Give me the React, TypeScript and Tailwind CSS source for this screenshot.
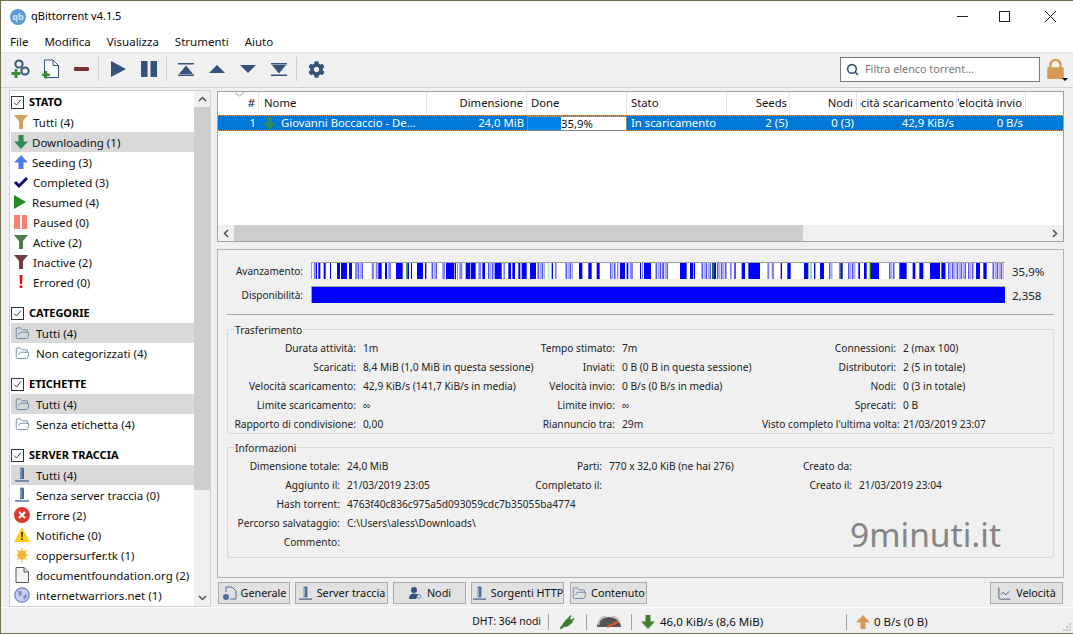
import React from "react";
import { FaCog } from "react-icons/fa";
import { FolderOpen, Search, LineChart } from "lucide-react";

const font = "font-['Noto_Sans',sans-serif]";

// piece map, numbers are in 1/3 px from the bar's left edge
const B = "#0000ff";
const L = "#8080ff";
const G = "#008000";
const P = "#90ee90";
const rawPieces: [number, number, string][] = [
  [8, 5, L], [14, 4, B], [22, 6, B], [38, 6, B], [57, 3, B], [78, 9, B], [90, 18, B], [114, 9, B], [132, 6, L], [140, 13, L],
  [182, 7, L], [194, 6, L], [202, 10, B], [222, 6, B], [232, 8, L], [255, 20, B], [286, 4, G], [290, 4, B], [300, 3, B], [318, 18, B],
  [342, 4, B], [362, 14, L], [394, 8, L], [405, 25, B], [432, 10, L], [445, 9, L], [464, 14, B], [480, 14, B], [502, 8, L], [514, 8, B],
  [532, 20, L], [552, 20, B], [577, 5, L], [592, 8, B], [604, 8, B], [622, 6, B], [632, 15, B], [657, 18, B], [680, 20, L], [712, 3, P],
  [722, 4, B], [732, 5, L], [764, 23, L], [804, 10, B], [832, 10, B], [857, 9, B], [898, 16, L], [918, 4, L], [927, 15, B], [947, 5, B],
  [957, 9, L], [987, 15, L], [1002, 18, B], [1034, 21, L], [1055, 14, L], [1107, 20, B], [1137, 17, L], [1140, 7, B], [1172, 30, L], [1203, 4, G],
  [1207, 8, B], [1219, 30, L], [1257, 5, L], [1270, 4, B], [1292, 10, B], [1312, 35, B], [1369, 6, L], [1382, 7, L], [1409, 4, B], [1429, 10, B],
  [1479, 13, B], [1497, 6, P], [1509, 4, B], [1527, 12, B], [1555, 12, L], [1585, 4, G], [1589, 6, B], [1612, 23, L], [1642, 5, B], [1659, 8, B],
  [1676, 4, G], [1680, 24, B], [1735, 14, L], [1765, 22, B], [1805, 8, B], [1825, 12, B], [1857, 27, B], [1884, 20, L], [1892, 10, B], [1912, 20, L],
  [1937, 25, L], [1972, 15, L], [1995, 12, B], [2017, 10, B], [2045, 32, L],
];

// the wide pale runs in the bar are really thin stripes
const pieces = rawPieces.flatMap(([x, w, color]): [number, number, string][] => {
  if (color !== L || w < 10) return [[x, w, color]];
  const out: [number, number, string][] = [];
  for (let i = 0; i < w; i += 6) out.push([x + i, 3, i % 12 === 0 ? B : L]);
  return out;
});

function Funnel({ color }: { color: string }) {
  return (
    <svg width="14" height="14" viewBox="0 0 14 14">
      <path d="M0 0H14L9 6V14H5V6Z" fill={color} />
    </svg>
  );
}

function ArrowDown({ color = "#2e8b57", size = 14 }: { color?: string; size?: number }) {
  return (
    <svg width={size} height={size} viewBox="0 0 14 14" className="shrink-0">
      <path d="M4.5 0H9.5V6.5H14L7 14L0 6.5H4.5Z" fill={color} />
    </svg>
  );
}

function ArrowUp({ color = "#4d7ae8", size = 14 }: { color?: string; size?: number }) {
  return (
    <svg width={size} height={size} viewBox="0 0 14 14" className="shrink-0">
      <path d="M4.5 14H9.5V7.5H14L7 0L0 7.5H4.5Z" fill={color} />
    </svg>
  );
}

function Tracker({ size = 16 }: { size?: number }) {
  return (
    <svg width={size} height={size} viewBox="0 0 16 16" className="shrink-0">
      <path d="M6 1.5Q6 .5 8 .5T10 1.5V12H6Z" fill="#4a6a94" />
      <path d="M7 2V11" stroke="#a9bcd3" strokeWidth="1" />
      <path d="M1 14H15" stroke="#4a6a94" strokeWidth="1.4" />
    </svg>
  );
}

const Folder = () => <FolderOpen size={15} strokeWidth={1.2} color="#4f6f9c" className="shrink-0" />;

const statusItems: [React.ReactNode, string, string][] = [
  [<Funnel color="#d9a05b" />, "Tutti (4)", "ml-[5px]"],
  [<ArrowDown color="#2e8b57" />, "Downloading (1)", "ml-[4px]"],
  [<ArrowUp />, "Seeding (3)", "ml-[4px]"],
  [
    <svg width="14" height="14" viewBox="0 0 14 14">
      <path d="M1 7L5 11L13 3" fill="none" stroke="#0b0b7a" strokeWidth="3" />
    </svg>,
    "Completed (3)",
    "ml-[5px]",
  ],
  [
    <svg width="14" height="14" viewBox="0 0 14 14">
      <path d="M0 0L12 7L0 14Z" fill="#228b22" />
    </svg>,
    "Resumed (4)",
    "ml-[4px]",
  ],
  [
    <svg width="14" height="14" viewBox="0 0 14 14">
      <path d="M0 0H6V14H0ZM8 0H13V14H8Z" fill="#fa8072" />
    </svg>,
    "Paused (0)",
    "ml-[5px]",
  ],
  [<Funnel color="#4c7c4c" />, "Active (2)", "ml-[5px]"],
  [<Funnel color="#6f3f3f" />, "Inactive (2)", "ml-[5px]"],
  [
    <svg width="14" height="14" viewBox="0 0 14 14">
      <path d="M5.5 0H8.5L8 9H6ZM5.7 10.5H8.3V13H5.7Z" fill="#ff0000" />
    </svg>,
    "Errored (0)",
    "ml-[5px]",
  ],
];

const trackerIcons: [React.ReactNode, string][] = [
  [
    <svg width="16" height="16" viewBox="0 0 16 16">
      <circle cx="8" cy="8" r="8" fill="#db3b2b" />
      <path d="M5 5L11 11M11 5L5 11" stroke="#fff" strokeWidth="2" />
    </svg>,
    "Errore (2)",
  ],
  [
    <svg width="16" height="16" viewBox="0 0 16 16">
      <path d="M8 0L16 15H0Z" fill="#fcd116" />
      <path d="M7.2 5H8.8L8.5 10.5H7.5ZM7.2 11.5H8.8V13H7.2Z" fill="#111" />
    </svg>,
    "Notifiche (0)",
  ],
  [
    <svg width="16" height="16" viewBox="0 0 16 16">
      <path d="M8 1V15M1 8H15M3 3L13 13M13 3L3 13" stroke="#f3c760" strokeWidth="1.2" />
      <circle cx="8" cy="8" r="4.5" fill="#f2b632" />
    </svg>,
    "coppersurfer.tk (1)",
  ],
  [
    <svg width="16" height="16" viewBox="0 0 16 16">
      <path d="M2 .5H10L14.5 5V15.5H2Z" fill="#f4f4f4" stroke="#555" strokeWidth="1" />
      <path d="M10 .5V5H14.5" fill="#ddd" stroke="#555" strokeWidth="1" />
    </svg>,
    "documentfoundation.org (2)",
  ],
  [
    <svg width="16" height="16" viewBox="0 0 16 16">
      <circle cx="8" cy="8" r="7.2" fill="#c6d0ee" stroke="#6f7fc4" strokeWidth="1.2" />
      <path d="M4 4Q8 3 8 6T5 9ZM9 9L13 7Q13 11 10 13Z" fill="#7f8fd0" />
    </svg>,
    "internetwarriors.net (1)",
  ],
];

function SectionHead({ title, first }: { title: string; first?: boolean }) {
  return (
    <div className={`flex items-center h-5 ${first ? "" : "mt-[11px]"}`}>
      <div className="w-[13px] h-[13px] border border-[#333] flex items-center justify-center bg-white">
        <svg width="9" height="9" viewBox="0 0 9 9">
          <path d="M1 4.5L3.5 7L8 1.5" fill="none" stroke="#444" strokeWidth="1" />
        </svg>
      </div>
      <span className="ml-[5px] text-[11px] font-bold text-black">{title}</span>
    </div>
  );
}

function SideRow({ icon, label, active, textClass }: { icon: React.ReactNode; label: string; active?: boolean; textClass: string }) {
  return (
    <div className={`flex items-center h-5 pl-[3px] ${active ? "bg-[#d9d9d9]" : ""}`}>
      {icon}
      <span className={`${textClass} pt-[2px] text-[11.5px] text-[#111] whitespace-nowrap`}>{label}</span>
    </div>
  );
}

function Sidebar() {
  const wide = "ml-[6px]";
  const iconBox = (node: React.ReactNode) => <span className="w-[16px] flex justify-center shrink-0">{node}</span>;
  return (
    <div className="w-[202px] h-[517px] ml-[8px] mt-[2px] flex bg-white border border-[#d0d0d0]">
      <div className="w-[185px] pl-[1px] pt-[1px] overflow-hidden">
        <SectionHead title="STATO" first />
        {statusItems.map(([icon, label, ml], i) => (
          <SideRow key={label} icon={<span className="w-[14px] flex justify-center shrink-0">{icon}</span>} label={label} active={i === 1} textClass={ml} />
        ))}
        <SectionHead title="CATEGORIE" />
        <SideRow icon={iconBox(<Folder />)} label="Tutti (4)" active textClass={wide} />
        <SideRow icon={iconBox(<Folder />)} label="Non categorizzati (4)" textClass={wide} />
        <SectionHead title="ETICHETTE" />
        <SideRow icon={iconBox(<Folder />)} label="Tutti (4)" active textClass={wide} />
        <SideRow icon={iconBox(<Folder />)} label="Senza etichetta (4)" textClass={wide} />
        <SectionHead title="SERVER TRACCIA" />
        <SideRow icon={iconBox(<Tracker />)} label="Tutti (4)" active textClass={wide} />
        <SideRow icon={iconBox(<Tracker />)} label="Senza server traccia (0)" textClass={wide} />
        {trackerIcons.map(([icon, label]) => (
          <SideRow key={label} icon={iconBox(icon)} label={label} textClass={wide} />
        ))}
      </div>
      <div className="w-[16px] flex flex-col bg-[#f0f0f0]">
        <div className="h-[16px] flex items-center justify-center">
          <svg width="9" height="6" viewBox="0 0 9 6"><path d="M1 5L4.5 1.5L8 5" fill="none" stroke="#505050" strokeWidth="1.5" /></svg>
        </div>
        <div className="h-[383px] bg-[#cdcdcd]" />
        <div className="flex-1" />
        <div className="h-[16px] flex items-center justify-center">
          <svg width="9" height="6" viewBox="0 0 9 6"><path d="M1 1L4.5 4.5L8 1" fill="none" stroke="#505050" strokeWidth="1.5" /></svg>
        </div>
      </div>
    </div>
  );
}

const sep = <div className="w-px h-[24px] bg-[#d0d0d0] mx-[5px]" />;

function Toolbar() {
  const c = "#35527a";
  return (
    <div className="flex items-center h-[34px] pl-[8px] pr-[8px] pb-[2px]">
      <div className="w-[24px] flex justify-center">
        <svg width="20" height="20" viewBox="0 0 20 20">
          <circle cx="8" cy="5" r="3.6" fill="none" stroke={c} strokeWidth="2" />
          <circle cx="14" cy="12" r="3.6" fill="none" stroke={c} strokeWidth="2" />
          <path d="M5 10V19M0.5 14.5H9.5" stroke="#3a8a3a" strokeWidth="2.8" />
        </svg>
      </div>
      <div className="w-[24px] ml-[6px] flex justify-center">
        <svg width="20" height="20" viewBox="0 0 20 20">
          <path d="M3.5 1H12L17.5 6.5V18.5H3.5Z" fill="#fff" stroke={c} strokeWidth="1" />
          <path d="M12 1V6.5H17.5" fill="none" stroke={c} strokeWidth="1" />
          <path d="M5 12V19.5M1.2 15.7H8.8" stroke="#3a8a3a" strokeWidth="2.4" />
        </svg>
      </div>
      <div className="w-[24px] ml-[6px] flex justify-center">
        <div className="w-[15px] h-[4px] rounded-[1px] bg-[#7a3333]" />
      </div>
      {sep}
      <div className="w-[24px] ml-[2px] flex justify-center">
        <svg width="16" height="16" viewBox="0 0 16 16"><path d="M1 0L16 8L1 16Z" fill={c} /></svg>
      </div>
      <div className="w-[24px] ml-[7px] flex justify-center">
        <svg width="16" height="16" viewBox="0 0 16 16"><path d="M0 0H6.5V16H0ZM9.5 0H16V16H9.5Z" fill={c} /></svg>
      </div>
      {sep}
      <div className="w-[24px] ml-[2px] flex justify-center">
        <svg width="16" height="13" viewBox="0 0 16 13"><path d="M0 0H16V1.5H0ZM8 2.5L15 11H1ZM0 11.5H16V13H0Z" fill={c} /></svg>
      </div>
      <div className="w-[24px] ml-[7px] flex justify-center">
        <svg width="16" height="8" viewBox="0 0 16 8"><path d="M8 0L16 8H0Z" fill={c} /></svg>
      </div>
      <div className="w-[24px] ml-[7px] flex justify-center">
        <svg width="16" height="8" viewBox="0 0 16 8"><path d="M0 0H16L8 8Z" fill={c} /></svg>
      </div>
      <div className="w-[24px] ml-[7px] flex justify-center">
        <svg width="16" height="13" viewBox="0 0 16 13"><path d="M0 0H16V1.5H0ZM1 2H15L8 10.5ZM0 11.5H16V13H0Z" fill={c} /></svg>
      </div>
      {sep}
      <div className="w-[24px] ml-[2px] flex justify-center">
        <FaCog size={17} color={c} />
      </div>
      <div className="flex-1" />
      <div className="w-[200px] h-[25px] bg-white border border-[#7a7a7a] flex items-center pl-[5px]">
        <Search size={13} strokeWidth={3} color={c} />
        <span className="ml-[6px] text-[10.8px] text-[#777]">Filtra elenco torrent…</span>
      </div>
      <div className="relative ml-[6px] w-[19px] h-[22px]">
        <svg width="19" height="22" viewBox="0 0 20 24">
          <path d="M4.5 11V7.5A5.5 5.5 0 0 1 15.5 7.5V11" fill="none" stroke="#d29a55" strokeWidth="2.6" />
          <rect x="1" y="10" width="18" height="13" rx="1.5" fill="#d29a55" />
        </svg>
        <div className="absolute right-[-3px] bottom-[-1px] w-0 h-0 border-l-[3px] border-r-[3px] border-t-[3px] border-l-transparent border-r-transparent border-t-black" />
      </div>
    </div>
  );
}

const headers: [string, string, string][] = [
  ["#", "w-[41px]", "justify-end pr-[3px]"],
  ["Nome", "w-[168px]", "justify-start pl-[5px]"],
  ["Dimensione", "w-[100px]", "justify-end pr-[3px]"],
  ["Done", "w-[100px]", "justify-start pl-[4px]"],
  ["Stato", "w-[100px]", "justify-start pl-[4px]"],
  ["Seeds", "w-[63px]", "justify-end pr-[2px]"],
  ["Nodi", "w-[67px]", "justify-end pr-[3px]"],
  ["Velocità scaricamento", "w-[100px]", "justify-end pl-[3px] pr-[2px]"],
  ["Velocità invio", "w-[69px]", "justify-end pl-[1px] pr-[3px]"],
];

function TorrentTable() {
  return (
    <div className="h-[151px] flex flex-col bg-white border border-[#a0a0a0]">
      <div className="relative flex h-[23px]">
        {headers.map(([title, w, align]) => (
          <div key={title} className={`${w} ${align} flex items-center shrink-0 border-r border-[#e5e5e5] text-[11.3px] text-[#111] whitespace-nowrap`}>
            <div className="flex justify-end overflow-hidden">
              <span className="shrink-0">{title}</span>
            </div>
          </div>
        ))}
        <svg className="absolute left-[16px] top-0" width="11" height="5" viewBox="0 0 11 5">
          <path d="M1 .5L5.5 4L10 .5" fill="none" stroke="#a0a0a0" strokeWidth="1" />
        </svg>
      </div>
      <div className="flex h-[16px] bg-[#0078d7] text-white text-[11.3px] items-center border-y border-dotted border-[#e8a060] whitespace-nowrap">
        <div className="w-[41px] text-right pr-[3px]">1</div>
        <div className="w-[168px] flex items-center pl-[4px]">
          <ArrowDown size={13} />
          <span className="ml-[5px]">Giovanni Boccaccio - De...</span>
        </div>
        <div className="w-[100px] text-right pr-[3px]">24,0 MiB</div>
        <div className="relative w-[100px] h-[15px] bg-white border border-[#888] text-[#111] text-center shrink-0">
          <div className="absolute left-0 top-0 bottom-0 w-[33px] bg-[#0083e8]" />
          <span className="relative leading-[13px] block">35,9%</span>
        </div>
        <div className="w-[100px] pl-[4px]">In scaricamento</div>
        <div className="w-[63px] text-right pr-[2px]">2 (5)</div>
        <div className="w-[67px] text-right pr-[3px]">0 (3)</div>
        <div className="w-[100px] text-right pr-[3px]">42,9 KiB/s</div>
        <div className="w-[69px] text-right pr-[3px]">0 B/s</div>
      </div>
      <div className="flex-1" />
      <div className="h-[16px] flex bg-[#f0f0f0]">
        <div className="w-[16px] flex items-center justify-center">
          <svg width="6" height="9" viewBox="0 0 6 9"><path d="M5 1L1.5 4.5L5 8" fill="none" stroke="#505050" strokeWidth="1.5" /></svg>
        </div>
        <div className="w-[569px] bg-[#cdcdcd]" />
        <div className="flex-1" />
        <div className="w-[16px] flex items-center justify-center">
          <svg width="6" height="9" viewBox="0 0 6 9"><path d="M1 1L4.5 4.5L1 8" fill="none" stroke="#505050" strokeWidth="1.5" /></svg>
        </div>
      </div>
    </div>
  );
}

type Cell = [string, string];

const transfer: Cell[][] = [
  [["Durata attività:", "1m"], ["Tempo stimato:", "7m"], ["Connessioni:", "2 (max 100)"]],
  [["Scaricati:", "8,4 MiB (1,0 MiB in questa sessione)"], ["Inviati:", "0 B (0 B in questa sessione)"], ["Distributori:", "2 (5 in totale)"]],
  [["Velocità scaricamento:", "42,9 KiB/s (141,7 KiB/s in media)"], ["Velocità invio:", "0 B/s (0 B/s in media)"], ["Nodi:", "0 (3 in totale)"]],
  [["Limite scaricamento:", "∞"], ["Limite invio:", "∞"], ["Sprecati:", "0 B"]],
  [["Rapporto di condivisione:", "0,00"], ["Riannuncio tra:", "29m"], ["Visto completo l'ultima volta:", "21/03/2019 23:07"]],
];

const info: Cell[][] = [
  [["Dimensione totale:", "24,0 MiB"], ["Parti:", "770 x 32,0 KiB (ne hai 276)"], ["Creato da:", ""]],
  [["Aggiunto il:", "21/03/2019 23:05"], ["Completato il:", ""], ["Creato il:", "21/03/2019 23:04"]],
  [["Hash torrent:", "4763f40c836c975a5d093059cdc7b35055ba4774"], ["", ""], ["", ""]],
  [["Percorso salvataggio:", "C:\\Users\\aless\\Downloads\\"], ["", ""], ["", ""]],
  [["Commento:", ""], ["", ""], ["", ""]],
];

function Group({ title, rows, cols, height, className }: { title: string; rows: Cell[][]; cols: string; height: string; className: string }) {
  return (
    <div className={`relative border border-[#d8d8d8] rounded-[2px] mx-[9px] ${height} ${className}`}>
      <span className="absolute left-[6px] -top-[6px] px-[1px] bg-[#f0f0f0] text-[10.2px] leading-[13px] text-[#222]">{title}</span>
      <div className={`grid ${cols} auto-rows-[19px] pt-[9px] text-[10.2px] text-[#222] whitespace-nowrap`}>
        {rows.flat().map(([label, value], i) => (
          <React.Fragment key={i}>
            <div className="text-right leading-[19px]">{label}</div>
            <div className="pl-[7px] leading-[19px]">{value}</div>
          </React.Fragment>
        ))}
      </div>
    </div>
  );
}

function DetailsPanel() {
  return (
    <div className="h-[329px] mt-[7px] border border-[#b4b4b4] bg-[#f0f0f0]">
      <div className="flex items-start h-[17px] mt-[12px] text-[10px] leading-[15px] text-[#222]">
        <div className="w-[93px] text-right pr-[8px] pt-[2px]">Avanzamento:</div>
        <svg className="w-[694px] h-[17px]" viewBox="0 0 2082 51" preserveAspectRatio="none">
          <rect width="2082" height="51" fill="#fff" />
          {pieces.map(([x, w, color]) => (
            <rect key={x} x={x} y="3" width={w} height="48" fill={color} />
          ))}
          <rect width="2082" height="3" fill="#a0a0a0" />
          <rect width="3" height="51" fill="#a0a0a0" />
        </svg>
        <div className="ml-[7px] pt-[2px] text-[11.5px]">35,9%</div>
      </div>
      <div className="flex items-start h-[17px] mt-[7px] text-[10px] leading-[15px] text-[#222]">
        <div className="w-[93px] text-right pr-[8px] pt-[2px]">Disponibilità:</div>
        <div className="w-[694px] h-[17px] bg-[#0000ff] border-t border-l border-[#a0a0a0]" />
        <div className="ml-[7px] pt-[2px] text-[11.5px]">2,358</div>
      </div>
      <div className="h-px mx-[9px] mt-[11px] bg-[#a8a8a8]" />
      <Group title="Trasferimento" rows={transfer} cols="grid-cols-[128px_184px_75px_147px_134px_1fr]" height="h-[105px]" className="mt-[14px]" />
      <Group title="Informazioni" rows={info} cols="grid-cols-[112px_140px_122px_160px_90px_1fr]" height="h-[111px]" className="mt-[13px]" />
    </div>
  );
}

function TabButton({ icon, label, width, className = "" }: { icon: React.ReactNode; label: string; width: string; className?: string }) {
  return (
    <div className={`flex items-center justify-center gap-[4px] h-[22px] ${width} ${className} bg-[#e1e1e1] border border-[#adadad] text-[10.8px] text-[#111] whitespace-nowrap`}>
      {icon}
      <span className="pt-[1px]">{label}</span>
    </div>
  );
}

function TabBar() {
  return (
    <div className="flex mt-[4px] pl-[1px] gap-[5px] items-center">
      <TabButton
        width="w-[72px]"
        label="Generale"
        icon={
          <svg width="15" height="15" viewBox="0 0 15 15" className="shrink-0">
            <path d="M4 6V1H10L14 5V13H8" fill="none" stroke="#4f6f9c" strokeWidth="1" />
            <circle cx="4" cy="11" r="3" fill="#4f6f9c" />
          </svg>
        }
      />
      <TabButton width="w-[93px]" label="Server traccia" icon={<Tracker size={15} />} />
      <TabButton
        width="w-[73px]"
        label="Nodi"
        icon={
          <svg width="15" height="15" viewBox="0 0 15 15" className="shrink-0">
            <circle cx="6" cy="4" r="3" fill="#35527a" />
            <path d="M1 13Q1 7.5 6 7.5T10 9L8 13Z" fill="#35527a" />
            <circle cx="11" cy="10.5" r="2" fill="none" stroke="#6f8fb8" strokeWidth="1" />
          </svg>
        }
      />
      <TabButton width="w-[93px]" label="Sorgenti HTTP" icon={<Tracker size={15} />} />
      <TabButton width="w-[77px]" className="ml-[1px]" label="Contenuto" icon={<Folder />} />
      <div className="flex-1" />
      <TabButton width="w-[73px]" className="mr-[1px]" label="Velocità" icon={<LineChart size={15} strokeWidth={1.4} color="#35527a" />} />
    </div>
  );
}

function StatusBar() {
  const div = <div className="w-px h-[16px] bg-[#a0a0a0]" />;
  return (
    <div className="flex items-center justify-end h-[26px] border-t border-white pt-[2px] pr-[2px] text-[11.5px] text-[#111] bg-[#f0f0f0] whitespace-nowrap">
      <span className="text-[10.4px]">DHT: 364 nodi</span>
      <div className="ml-[7px]">{div}</div>
      <div className="mx-[11px]">
        <svg width="15" height="15" viewBox="0 0 15 15">
          <path d="M0 15L3 11L5 8L9 4L12 8L7 12L4 12Z M8 5L11 1.5M11 8L14 4.5" fill="#3f7f2f" stroke="#3f7f2f" strokeWidth="1.6" />
        </svg>
      </div>
      {div}
      <div className="mx-[10px]">
        <svg width="24" height="12" viewBox="0 0 24 12">
          <path d="M0 11A12 10 0 0 1 24 11Z" fill="#555" />
          <path d="M2 9A10 8 0 0 1 22 6" fill="none" stroke="#bbb" strokeWidth="1.5" />
          <path d="M10 11L21 6" stroke="#e05a20" strokeWidth="2" />
        </svg>
      </div>
      {div}
      <div className="ml-[9px]"><ArrowDown color="#3f7f2f" size={14} /></div>
      <span className="ml-[5px] w-[186px]">46,0 KiB/s (8,6 MiB)</span>
      {div}
      <div className="ml-[9px]"><ArrowUp color="#d29a55" size={14} /></div>
      <span className="ml-[4px] w-[188px]">0 B/s (0 B)</span>
      <svg width="9" height="9" viewBox="0 0 9 9" className="self-end mb-[2px]">
        <path d="M7 1h2v2H7zM4 4h2v2H4zM7 4h2v2H7zM1 7h2v2H1zM4 7h2v2H4zM7 7h2v2H7z" fill="#c8c8c8" />
      </svg>
    </div>
  );
}

export default function App() {
  return (
    <div className={`relative w-[1073px] h-[634px] overflow-hidden bg-[#f0f0f0] border-t border-l border-b border-[#6f6f50] ${font}`}>
      <div className="flex items-center h-[31px] bg-white">
        <div className="ml-[9px] w-[16px] h-[16px] rounded-full bg-[#5a9bd8] flex items-center justify-center text-[9px] font-bold text-[#cfe3f6] leading-none">qb</div>
        <span className="ml-[5px] text-[11px] text-black">qBittorrent v4.1.5</span>
        <div className="flex-1" />
        <svg width="11" height="11" viewBox="0 0 11 11"><path d="M0 5.5H11" stroke="#222" strokeWidth="1" /></svg>
        <svg className="ml-[31px]" width="11" height="11" viewBox="0 0 11 11"><rect x=".5" y=".5" width="10" height="10" fill="none" stroke="#222" strokeWidth="1" /></svg>
        <svg className="ml-[35px] mr-[17px]" width="11" height="11" viewBox="0 0 11 11"><path d="M0 0L11 11M11 0L0 11" stroke="#222" strokeWidth="1" /></svg>
      </div>
      <div className="flex items-center h-[21px] bg-white border-b border-[#e8e8e8] pl-[9px] gap-[16px] text-[11.5px] text-[#111]">
        <span>File</span>
        <span>Modifica</span>
        <span>Visualizza</span>
        <span>Strumenti</span>
        <span>Aiuto</span>
      </div>
      <Toolbar />
      <div className="h-px bg-[#d0d0d0]" />
      <div className="flex h-[519px]">
        <Sidebar />
        <div className="w-[847px] ml-[6px] pt-[3px]">
          <TorrentTable />
          <DetailsPanel />
          <TabBar />
        </div>
      </div>
      <StatusBar />
      <div className="absolute left-[849px] top-[511px] text-[33.5px] leading-[44px] text-[#858585]">9minuti.it</div>
    </div>
  );
}
